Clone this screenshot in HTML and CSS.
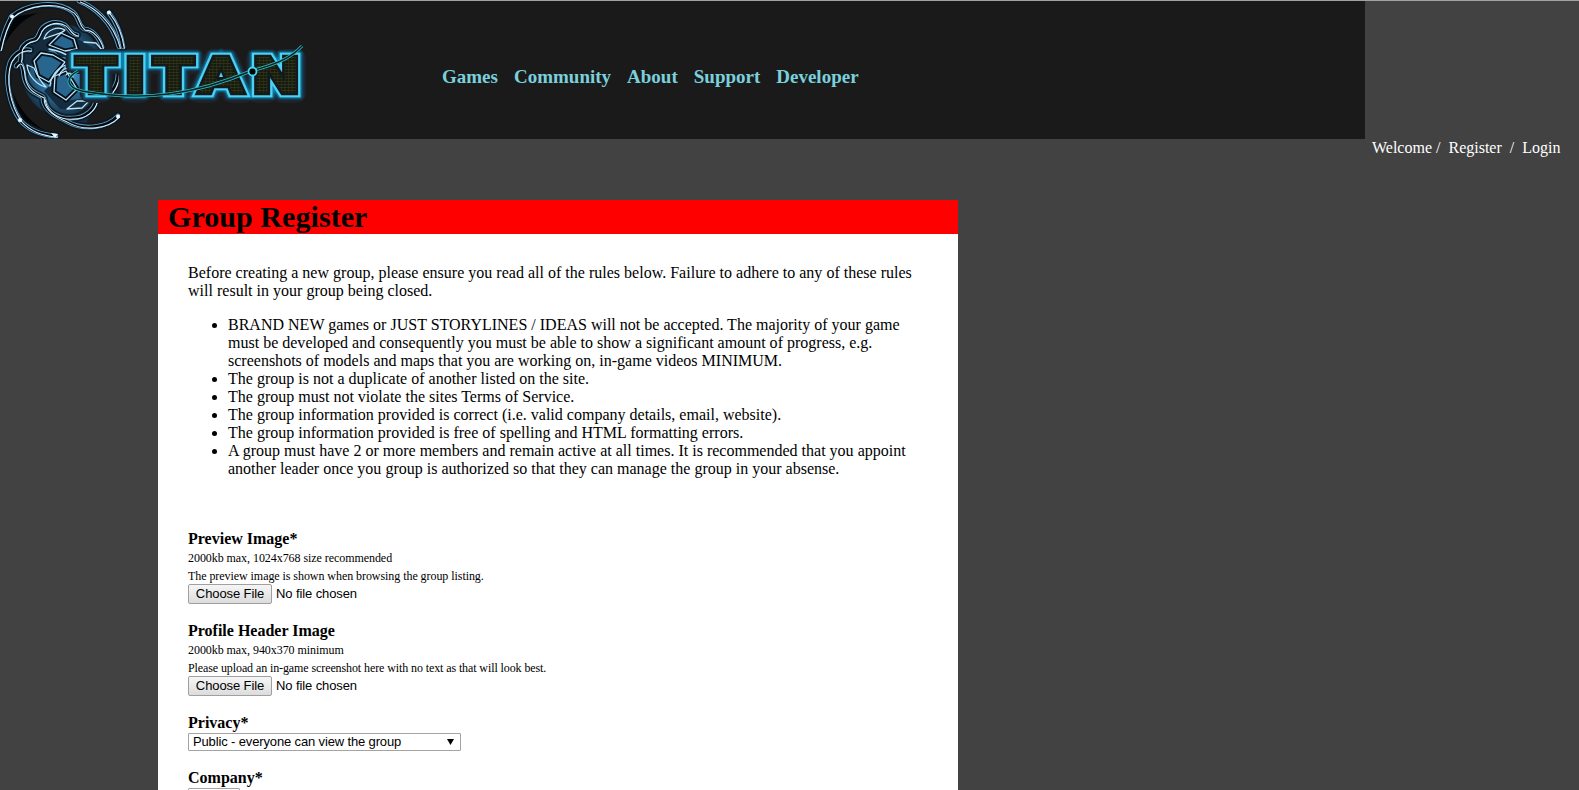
FILE: index.html
```html
<!DOCTYPE html>
<html lang="en">
<head>
<meta charset="utf-8">
<title>Group Register</title>
<link rel="stylesheet" href="styles.css">
</head>
<body>
<header class="top">
  <div class="banner">
    <svg class="logo" width="310" height="138" viewBox="0 1 310 138">
      <defs>
        <radialGradient id="core"><stop offset="0" stop-color="#4fb0e2"/><stop offset=".6" stop-color="#2c6a94"/><stop offset="1" stop-color="#173349"/></radialGradient>
        <pattern id="mesh" width="3" height="3" patternUnits="userSpaceOnUse"><path d="M0 0H3V3H0z" fill="#15190f"/><path d="M0 .5H3M.5 0V3" stroke="#343a18" stroke-width=".6"/></pattern>
        <filter id="glow" x="-10%" y="-30%" width="120%" height="160%"><feGaussianBlur stdDeviation="1.3"/></filter>
        <g id="arms" fill="none" stroke-linecap="round" stroke-linejoin="round">
          <path d="M11 17C26 4 56-1 73 12C80 18 77 24 84 29C92 29 99 37 102 47"/>
          <path d="M20 61C23 54 17 50 26 43C33 38 35 43 39 34C42 24 55 19 65 25C70 29 70 34 77 35"/>
          <path d="M79 1C92 6 112 20 119 47M109 13C117 23 121 34 123 47"/>
          <path d="M0 49C3 34 7 24 12 16"/>
          <path d="M20 120C9 104 4 78 10 62C14 54 22 48 30 50"/>
          <path d="M16 66C21 58 23 67 24 77C27 91 36 93 43 97C42 109 54 116 66 121C83 131 107 128 118 116"/>
          <path d="M20 120C30 132 43 135 56 136M44 99C46 113 60 119 72 118C86 118 94 109 96 101"/>
          <path d="M118 74C118 83 114 89 108 96"/>
        </g>
      </defs>
      <path d="M12 17L1 49L8 39C14 29 28 13 45 12ZM109 12L118 47H124C122 29 119 21 109 12ZM20 119L12 90C18 106 28 122 48 132Z" fill="#020406"/>
      <ellipse cx="62" cy="70" rx="41" ry="46" fill="url(#core)"/>
      <path d="M27 48C38 25 52 20 66 27L76 38L99 51L88 58L60 57L53 49L34 58L28 76L19 63ZM24 78L42 95L50 108L74 119L94 106L86 124L65 120L46 111L39 95ZM44 91L54 82L62 101L80 99L91 98L80 110L60 109Z" fill="#142c3e"/>
      <use href="#arms" stroke="#0a1722" stroke-width="8" opacity=".8"/>
      <use href="#arms" stroke="#5c9fc9" stroke-width="4.600"/>
      <use href="#arms" stroke="#05090d" stroke-width="2.800"/>
      <use href="#arms" stroke="#d3edfb" stroke-width="1.100" transform="translate(1.300 1.100)"/>
      <g fill="#28658f" stroke="#071018" stroke-width="5" stroke-linejoin="round">
        <path d="M49 45L61 33L74 39L77 49L65 51Z"/><path d="M34 61L41 53L53 55L65 62L49 82L38 76Z"/><path d="M55 76L66 71L77 89L66 100L54 92Z"/>
      </g>
      <g fill="none" stroke="#b9e4fb" stroke-width="1.300" stroke-linejoin="round" stroke-linecap="round">
        <path d="M49 45L61 33L74 39L77 49L65 51Z"/><path d="M34 61L41 53L53 55L65 62L49 82L38 76Z"/><path d="M55 76L66 71L77 89L66 100L54 92Z"/>
        <path d="M49 49C61 51 68 55 73 59M50 86C51 73 62 64 70 65M59 76C61 70 66 67 71 69M66 75C68 72 71 73 73 77M84 42L96 43L102 50M67 109L77 101H89L82 108Z"/>
        <path d="M44 39C47 29 58 26 65 30C60 35 53 34 44 39ZM27 65C28 76 37 85 46 87C41 82 37 75 34 68Z"/>
      </g>
      <g fill="#eefaff"><circle cx="12" cy="16.500" r="2"/><circle cx="109" cy="12.500" r="2"/><circle cx="20" cy="120" r="2"/><circle cx="118" cy="116.500" r="2"/><path d="M51 133L58 134L55 138Z"/></g>
      <g class="wordmark" font-size="49" transform="scale(1.2 1)">
        <text class="shade" x="63.300 103.400 127.900 165.200 209.500" y="94">TITAN</text>
        <text class="halo" x="63.300 103.400 127.900 165.200 209.500" y="93" filter="url(#glow)" aria-hidden="true">TITAN</text>
        <text class="edge" x="63.300 103.400 127.900 165.200 209.500" y="93" aria-hidden="true">TITAN</text>
        <text class="face" x="63.300 103.400 127.900 165.200 209.500" y="93" aria-hidden="true">TITAN</text>
      </g>
      <path d="M78 71C65 78 66 87 82 91C145 103 199 93 251 71C277 64 291 58 302 46" fill="none" stroke="#2fbcc2" stroke-width="3"/>
      <path d="M78 71C65 78 66 87 82 91C145 103 199 93 251 71C277 64 291 58 302 46" fill="none" stroke="#052027" stroke-width="1.400"/>
      <circle cx="252.500" cy="71.500" r="4" fill="#000" stroke="#40d4ee" stroke-width="1.800"/>
    </svg>
    <nav class="menu"><a>Games</a><a>Community</a><a>About</a><a>Support</a><a>Developer</a></nav>
  </div>
  <div class="account"><span>Welcome /</span><span>Register</span><span>/</span><span>Login</span></div>
</header>
<main class="panel">
  <h1 class="title">Group Register</h1>
  <div class="content">
    <p class="intro">Before creating a new group, please ensure you read all of the rules below. Failure to adhere to any of these rules<br>will result in your group being closed.</p>
    <ul class="rules">
      <li>BRAND NEW games or JUST STORYLINES / IDEAS will not be accepted. The majority of your game<br>must be developed and consequently you must be able to show a significant amount of progress, e.g.<br>screenshots of models and maps that you are working on, in-game videos MINIMUM.</li>
      <li>The group is not a duplicate of another listed on the site.</li>
      <li>The group must not violate the sites Terms of Service.</li>
      <li>The group information provided is correct (i.e. valid company details, email, website).</li>
      <li>The group information provided is free of spelling and HTML formatting errors.</li>
      <li>A group must have 2 or more members and remain active at all times. It is recommended that you appoint<br>another leader once you group is authorized so that they can manage the group in your absense.</li>
    </ul>
    <section class="field">
      <b>Preview Image*</b>
      <small>2000kb max, 1024x768 size recommended</small>
      <small>The preview image is shown when browsing the group listing.</small>
      <div class="file"><button class="choose">Choose File</button><span>No file chosen</span></div>
    </section>
    <section class="field">
      <b>Profile Header Image</b>
      <small>2000kb max, 940x370 minimum</small>
      <small class="tight">Please upload an in-game screenshot here with no text as that will look best.</small>
      <div class="file"><button class="choose">Choose File</button><span>No file chosen</span></div>
    </section>
    <section class="field privacy">
      <b>Privacy*</b>
      <div class="select"><span>Public - everyone can view the group</span><svg width="7" height="8" viewBox="0 0 7 8"><path d="M0 1H7L3.500 7Z"/></svg></div>
    </section>
    <section class="field">
      <b>Company*</b>
      <div class="select short"></div>
    </section>
  </div>
</main>
</body>
</html>
```
FILE: styles.css
```css
* { box-sizing: border-box; }
html { height: 100%; overflow: hidden; }
body {
  margin: 0;
  height: 790px;
  overflow: hidden;
  background: #424242;
  border-top: 1px solid #a0a3a3;
  font: 16px/18px "Liberation Serif", serif;
  color: #000;
}
.top { display: flex; height: 199px; }
.banner {
  display: flex;
  align-items: flex-start;
  flex: none;
  width: 1365px;
  height: 138px;
  background: #1a1a1a;
}
.logo { display: block; flex: none; }
.wordmark text { font-family: "DejaVu Sans", sans-serif; font-weight: bold; stroke-linejoin: miter; }
.wordmark .shade { fill: #10151c; stroke: #1d222c; stroke-width: 18px; stroke-linejoin: round; }
.halo { fill: none; stroke: #0888b6; stroke-width: 11px; }
.edge { fill: #4bd2f4; stroke: #4bd2f4; stroke-width: 8.4px; }
.face { fill: url(#mesh); stroke: #141a1b; stroke-width: 4.6px; paint-order: stroke; }
.menu {
  display: flex;
  gap: 16px;
  padding: 65px 0 0 132px;
  font-size: 19px;
  line-height: 22px;
  font-weight: bold;
  color: #7bd0dc;
}
.account {
  display: flex;
  gap: 8px;
  padding: 138px 0 0 7px;
  color: #fff;
  white-space: nowrap;
}
.panel {
  width: 800px;
  height: 590px;
  overflow: hidden;
  margin-left: 158px;
  background: #fff;
}
.title {
  margin: 0;
  padding-left: 10px;
  height: 34px;
  background: #f00;
  font-size: 30px;
  line-height: 34px;
  letter-spacing: .06px;
}
.content { padding: 30px 30px 0; white-space: nowrap; }
.intro { margin: 0 0 16px; letter-spacing: .01px; }
.rules { margin: 0 0 52px; padding-left: 40px; list-style: none; letter-spacing: .005px; }
.rules li::before {
  content: "";
  display: inline-block;
  width: 5px;
  height: 5px;
  margin: 0 11px 0 -16px;
  border-radius: 50%;
  background: #000;
  vertical-align: 2px;
}
.field { display: flex; flex-direction: column; align-items: flex-start; margin-bottom: 17px; }
.privacy { margin-bottom: 18px; }
.field b { display: block; }
.field small { height: 18px; padding-top: 1px; font-size: 12px; letter-spacing: -.06px; }
.field .tight { letter-spacing: -.1px; }
.file {
  display: flex;
  align-items: flex-start;
  gap: 4px;
  height: 21px;
  font: 13px/20px "Liberation Sans", sans-serif;
  letter-spacing: -.1px;
}
.choose {
  width: 84px;
  height: 20px;
  padding: 0;
  border: 1px solid #a0a0a0;
  border-radius: 2px;
  background: linear-gradient(#f6f6f6, #dcdcdc);
  font: inherit;
  line-height: 18px;
  letter-spacing: -.1px;
  color: #000;
}
.select {
  display: flex;
  align-items: center;
  justify-content: space-between;
  width: 273px;
  height: 18px;
  margin-top: 1px;
  padding: 0 6px 1px 4px;
  border: 1px solid #a4a4a4;
  border-radius: 1px;
  background: #fff;
  font: 13px/15px "Liberation Sans", sans-serif;
  letter-spacing: -.14px;
}
.short { width: 52px; }
```
